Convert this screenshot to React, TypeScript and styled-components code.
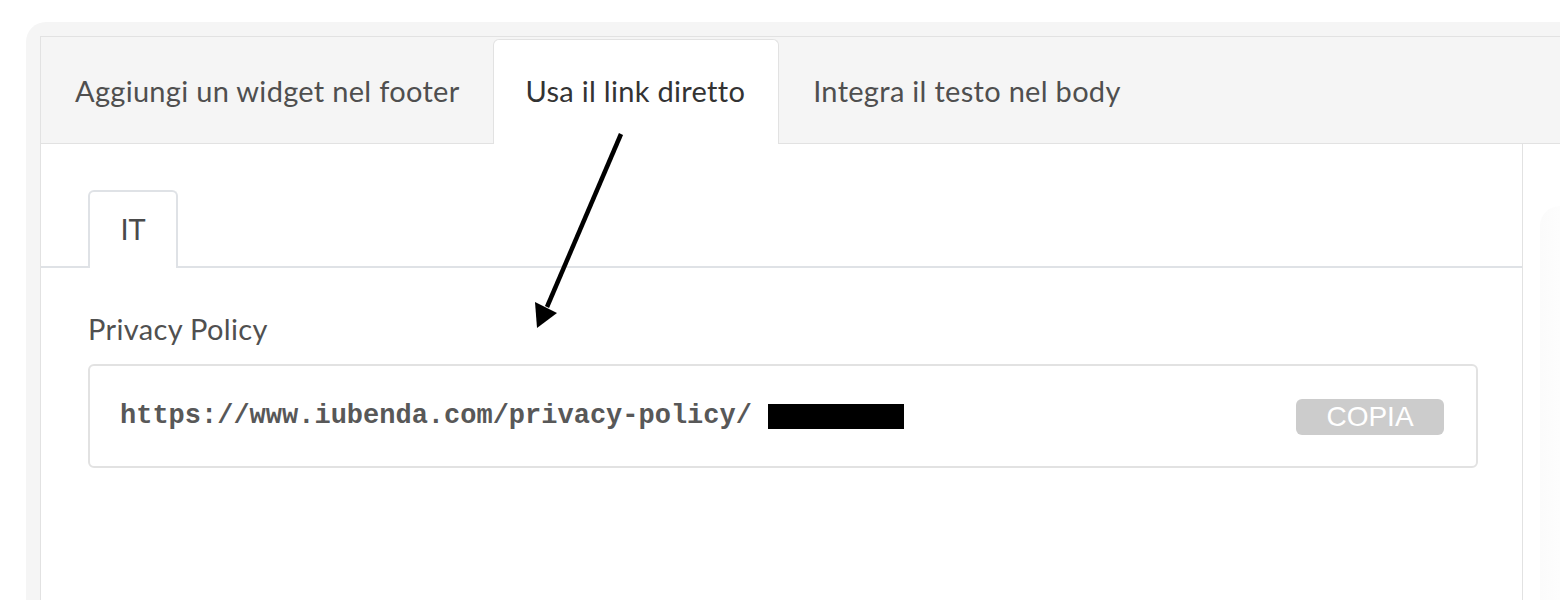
import styled, { createGlobalStyle } from "styled-components";

const GlobalStyle = createGlobalStyle`
  html, body {
    margin: 0;
    padding: 0;
    background: #ffffff;
    font-family: Lato, "Noto Sans", sans-serif;
  }
  * {
    box-sizing: border-box;
  }
`;

const Page = styled.div`
  position: relative;
  width: 1560px;
  height: 600px;
  overflow: hidden;
  padding: 22px 0 0 26px;
`;

const Shell = styled.div`
  background: #f5f5f5;
  border-radius: 20px 0 0 0;
  padding: 14px 0 0 14px;
  height: 620px;
`;

const Card = styled.div`
  display: flex;
  flex-direction: column;
  height: 100%;
  border-left: 1px solid #e2e2e2;
`;

const TabBar = styled.div`
  display: flex;
  align-items: flex-end;
  height: 108px;
  background: #f5f5f5;
  border-top: 1px solid #e2e2e2;
  border-bottom: 1px solid #e2e2e2;
`;

const Tab = styled.div<{ $active?: boolean }>`
  display: flex;
  align-items: center;
  height: ${(p) => (p.$active ? "105px" : "106px")};
  margin-bottom: ${(p) => (p.$active ? "-1px" : "0")};
  padding: ${(p) => (p.$active ? "0 33px 4px 32px" : "0 33px 0 34px")};
  font-size: 29px;
  letter-spacing: 0.3px;
  color: ${(p) => (p.$active ? "#333333" : "#4f4f4f")};
  background: ${(p) => (p.$active ? "#ffffff" : "transparent")};
  border: ${(p) => (p.$active ? "1px solid #e2e2e2" : "none")};
  border-bottom: none;
  border-radius: 6px 6px 0 0;
  white-space: nowrap;
`;

const Body = styled.div`
  display: flex;
  flex: 1;
`;

const Content = styled.div`
  width: 1482px;
  background: #ffffff;
  border-right: 1px solid #e2e2e2;
  padding-top: 46px;
`;

const Aside = styled.div`
  flex: 1;
  background: #ffffff;
  padding: 62px 0 0 17px;
`;

const Ghost = styled.div`
  height: 400px;
  border-radius: 24px 0 0 0;
  background: linear-gradient(to right, #fbfbfb, #fdfdfd);
`;

const LangBar = styled.div`
  display: flex;
  padding-left: 47px;
  border-bottom: 2px solid #dfe2e6;
`;

const LangTab = styled.div`
  width: 90px;
  height: 78px;
  margin-bottom: -2px;
  display: flex;
  align-items: center;
  justify-content: center;
  padding-bottom: 4px;
  font-size: 29px;
  color: #4a4a4a;
  background: #ffffff;
  border: 2px solid #dfe2e6;
  border-bottom: none;
  border-radius: 6px 6px 0 0;
`;

const Section = styled.div`
  padding: 44px 44px 0 47px;
`;

const Label = styled.div`
  font-size: 29px;
  letter-spacing: 0.35px;
  color: #505050;
  line-height: 34px;
  margin-bottom: 18px;
`;

const LinkBox = styled.div`
  display: flex;
  align-items: center;
  justify-content: space-between;
  height: 104px;
  padding: 0 32px 0 30px;
  border: 2px solid #e2e2e2;
  border-radius: 6px;
`;

const Url = styled.div`
  display: flex;
  align-items: center;
  font-family: "Liberation Mono", "Courier New", monospace;
  font-weight: bold;
  font-size: 27px;
  color: #585858;
`;

const Redacted = styled.span`
  display: inline-block;
  width: 136px;
  height: 25px;
  margin-left: 16px;
  background: #000000;
`;

const CopyButton = styled.button`
  width: 148px;
  height: 36px;
  border: none;
  border-radius: 6px;
  background: #cccccc;
  color: #ffffff;
  font-family: "Liberation Sans", Arial, sans-serif;
  font-size: 28px;
  line-height: 36px;
  padding: 0;
  margin-top: 2px;
`;

const Arrow = styled.svg`
  position: absolute;
  left: 0;
  top: 0;
  pointer-events: none;
`;

const tabs = ["Aggiungi un widget nel footer", "Usa il link diretto", "Integra il testo nel body"];

export default function App() {
  return (
    <>
      <GlobalStyle />
      <Page>
        <Shell>
          <Card>
            <TabBar>
              {tabs.map((t, i) => (
                <Tab key={t} $active={i === 1}>
                  {t}
                </Tab>
              ))}
            </TabBar>
            <Body>
              <Content>
                <LangBar>
                  <LangTab>IT</LangTab>
                </LangBar>
                <Section>
                  <Label>Privacy Policy</Label>
                  <LinkBox>
                    <Url>
                      https://www.iubenda.com/privacy-policy/
                      <Redacted />
                    </Url>
                    <CopyButton>COPIA</CopyButton>
                  </LinkBox>
                </Section>
              </Content>
              <Aside>
                <Ghost />
              </Aside>
            </Body>
          </Card>
        </Shell>
        <Arrow width="1560" height="600" viewBox="0 0 1560 600">
          <line x1="621" y1="134" x2="547" y2="307" stroke="#000" strokeWidth="4.5" />
          <polygon points="535,302 557,313 537,328" fill="#000" />
        </Arrow>
      </Page>
    </>
  );
}
